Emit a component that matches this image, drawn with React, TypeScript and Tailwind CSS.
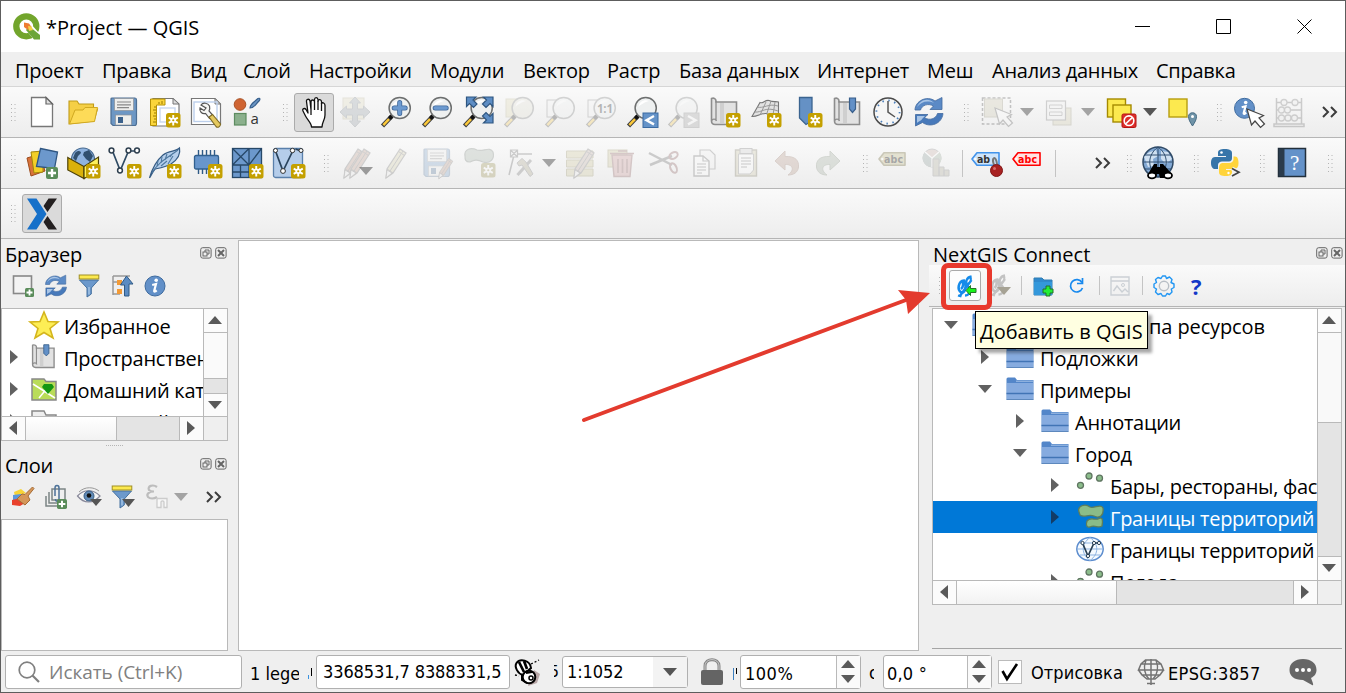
import type { ReactNode } from "react";

type P = { c?: string };

function Ic({ c = "", s = 32, dim = false, children }: { c?: string; s?: number; dim?: boolean; children: ReactNode }) {
  return (
    <svg
      width={s}
      height={s}
      viewBox={`0 0 ${s} ${s}`}
      fill="none"
      className={`shrink-0 overflow-visible ${dim ? "opacity-[0.26]" : ""} ${c}`}
    >
      {children}
    </svg>
  );
}

const Handle = ({ c = "" }: P) => (
  <svg width="5" height="17" viewBox="0 0 5 17" className={`shrink-0 ${c}`}>
    {[0, 4, 8, 12, 16].map((y) => (
      <g key={y} fill="#b4b4b4">
        <rect x="0" y={y} width="1" height="1" />
        <rect x="3.5" y={y} width="1" height="1" />
      </g>
    ))}
  </svg>
);

const Sep = ({ c = "" }: P) => <div className={`w-px shrink-0 bg-[#c4c4c4] ${c}`} />;

const Down = ({ c = "", f = "#a3a3a3" }: P & { f?: string }) => (
  <svg width="14" height="8" viewBox="0 0 14 8" className={`shrink-0 ${c}`}>
    <path d="M0 0H14L7 8Z" fill={f} />
  </svg>
);

const More = ({ c = "" }: P) => (
  <svg width="16" height="12" viewBox="0 0 16 12" className={`shrink-0 ${c}`} fill="none" stroke="#3c3c3c" strokeWidth="2">
    <path d="M1 1L6 6L1 11M9 1L14 6L9 11" />
  </svg>
);

const New = ({ x = 17, y = 16, f = "#c4a000" }: { x?: number; y?: number; f?: string }) => (
  <g transform={`translate(${x} ${y})`}>
    <rect width="14.5" height="14.5" rx="2.5" fill={f} />
    <path d="M7.25 2V12.5M2.7 4.6L11.8 9.9M11.8 4.6L2.7 9.9" stroke="#fff" strokeWidth="1.9" />
    <circle cx="7.25" cy="7.25" r="2.7" fill="#fff" />
    <circle cx="7.25" cy="7.25" r="1.1" fill={f} />
  </g>
);

const Plus = ({ x = 20, y = 20, s = 12 }: { x?: number; y?: number; s?: number }) => (
  <g transform={`translate(${x} ${y}) scale(${s / 12})`}>
    <rect width="12" height="12" rx="2" fill="#5a8c5a" />
    <path d="M6 2V10M2 6H10" stroke="#fff" strokeWidth="2.4" />
  </g>
);

const Glass = ({ fill = "#eef0f0" }: { fill?: string }) => (
  <>
    <path d="M11.5 20.5L2.5 30" stroke="#3f3f3f" strokeWidth="4.4" />
    <path d="M9 23.2L3.3 29.2" stroke="#fcc93a" strokeWidth="2.4" />
    <path d="M12.5 19.3L9.5 22.5" stroke="#111" strokeWidth="4" />
    <circle cx="19.7" cy="12" r="10.6" fill={fill} stroke="#6d6f6f" strokeWidth="1.5" />
    <path d="M12.5 11C13 5 19 3 23 5C19 6 14 9 12.5 11Z" fill="#fff" />
  </>
);

const Pointer = ({ x, y }: { x: number; y: number }) => (
  <path transform={`translate(${x} ${y})`} d="M0 0L4.5 16L8 12L13.5 18.5L17.5 15L12 9L16.5 6.5Z" fill="#fff" stroke="#444" strokeWidth="1.2" />
);

const Scroll = () => (
  <>
    <path d="M3.5 2.5C6 1.5 8 3 8 5V6H28.5V28.5H7C4.5 28.5 3.5 27 3.5 25Z" fill="#e2e2e2" stroke="#8d8d8d" strokeWidth="1.6" />
    <path d="M8 5V25M3.5 25C4 22.5 8 22.5 8.5 25" stroke="#8d8d8d" strokeWidth="1.3" />
    <path d="M12 7H16V27H12Z" fill="#cfcfcf" />
  </>
);

const Refresh = () => (
  <>
    <path d="M2 14C2 5 14-1 22 5L29 1.5V13.5H17L20.5 10C15 7 9 9 7.5 14Z" fill="#5b8ac6" stroke="#41699e" strokeWidth=".8" />
    <path d="M30 17.5C29 28 17 32 9.5 26.5L2.5 30V18.5H15L11.5 21.5C16 25 23 23 24.5 17.5Z" fill="#4779ba" stroke="#41699e" strokeWidth=".8" />
    <path d="M4 11C7 4 15 1 21 7C14 4 8 6 4 11Z" fill="#a9c5e6" />
    <path d="M4 20H12L9 23C9 24 5 26 4 27Z" fill="#a9c5e6" />
  </>
);

const Floppy = () => (
  <>
    <path d="M5 2H28C29 2 29.5 3 29.5 4V27C29.5 28.5 29 29.5 27.5 29.5H6L4 27.5V3C4 2.3 4.4 2 5 2Z" fill="#6d97c4" stroke="#4d6f94" strokeWidth="1.2" />
    <rect x="7.5" y="2.5" width="19" height="12" fill="#eeeeec" stroke="#8b9197" strokeWidth=".7" />
    <path d="M10 6H24M10 8.8H24M10 11.6H22" stroke="#888" strokeWidth="1.2" />
    <rect x="8.5" y="19" width="16" height="10" fill="#eeeeec" stroke="#8b9197" strokeWidth=".7" />
    <rect x="11" y="21" width="5" height="6" fill="#3b618b" />
  </>
);

const Pencil = ({ x = 0, y = 0, k = 1, f = "#d5cda8" }: { x?: number; y?: number; k?: number; f?: string }) => (
  <g transform={`translate(${x} ${y}) scale(${k})`}>
    <path d="M18 2L24 6L11 26L4 31L5 22Z" fill={f} stroke="#666" strokeWidth="1.2" />
    <path d="M21 4L8 24M5 22L11 26M16.5 4.5L22.5 8.5" stroke="#666" strokeWidth="1" />
    <path d="M5 23L10 26L4 31Z" fill="#eee" stroke="#555" strokeWidth=".8" />
  </g>
);

const Nodes = () => (
  <>
    <path d="M4.5 4L12 23M12.5 23L20.5 4M23 4H29" stroke="#2e4a63" strokeWidth="1.7" />
    {[[3.5, 3.5], [12, 23.5], [20.5, 3.5], [29, 3.5]].map(([a, b]) => (
      <circle key={a} cx={a} cy={b} r="2.4" fill="#fff" stroke="#2e3f4f" strokeWidth="1.5" />
    ))}
  </>
);

const Info = () => (
  <>
    <circle cx="12" cy="12" r="10" fill="#6290c8" stroke="#3e6b9f" />
    <circle cx="13.2" cy="6.2" r="1.8" fill="#fff" />
    <path d="M9.2 11L13 10L11.2 16.8C11 18 12.2 17.6 13.7 16.4" stroke="#fff" strokeWidth="2.2" />
  </>
);

const Funnel = () => (
  <>
    <path d="M2.5 6H21.5L14.3 14V20L10 23V14Z" fill="#6c99cc" stroke="#45719f" strokeWidth="1" />
    <rect x="2.2" y="1" width="19.6" height="4" fill="#fce94f" stroke="#a08f25" strokeWidth="1" />
    <path d="M12 13V20.5" stroke="#abc9e8" strokeWidth="1.3" />
  </>
);

const Tag = ({ x = 0, y = 0, f, st, t, w = 27 }: { x?: number; y?: number; f: string; st: string; t: string; w?: number }) => (
  <g transform={`translate(${x} ${y})`}>
    <path d={`M1 7L6 .8H${w}V13.2H6Z`} fill={f} stroke={st} strokeWidth="1.6" strokeLinejoin="round" />
    <circle cx="4.3" cy="7" r="1.2" fill="#fff" />
    <text x="6" y="11" fontSize="10.5" fontWeight="700" fontFamily="DejaVu Sans Condensed, Open Sans, sans-serif" fill={st === "#f00" ? "#f00" : "#333"} textLength={t === "abc" ? 19 : 13}>
      {t}
    </text>
  </g>
);

function Toolbar1() {
  return (
    <div className="flex h-[51px] shrink-0 items-center border-b border-[#b5b5b5] bg-gradient-to-b from-[#fafafa] to-[#ededed] pl-[10px]">
      <Handle />
      <div className="ml-[9px] flex gap-[9px]">
        <Ic>
          <path d="M6.5 1.5H21L27.5 8V30.5H6.5Z" fill="#fff" stroke="#777" strokeWidth="1.3" />
          <path d="M21 1.5V8H27.5Z" fill="#e0e0e0" stroke="#666" strokeWidth="1.2" />
        </Ic>
        <Ic>
          <path d="M3 28V5H11L13 8H27.5V13H31.5L28 25L3 28Z" fill="#f5cf45" stroke="#c09b18" strokeWidth="1.1" />
          <path d="M3.5 28L9 14H17L19 11.5H31.5L28.5 25.5Z" fill="#fddb58" stroke="#d1a921" strokeWidth="1" />
        </Ic>
        <Ic><Floppy /></Ic>
        <Ic>
          <path d="M5 2.5H25L31 8V30H5Z" fill="#fff" stroke="#777" strokeWidth="1.2" />
          <path d="M25 2.5V8H31Z" fill="#ddd" stroke="#777" />
          <path d="M2.5 3H17V9H8.5V29.5H2.5Z" fill="#fbd53b" stroke="#b59207" strokeWidth="1" />
          <path d="M6 11H8M5 14H8M6 17H8M5 20H8M6 23H8M5 26H8M11 6V8M14 5V8" stroke="#9a7b00" strokeWidth="1" />
          <rect x="12" y="12" width="15" height="14" fill="none" stroke="#c9d8ee" strokeWidth="1.4" />
          <New x={18} y={17} />
        </Ic>
        <Ic>
          <path d="M2.5 2.5H26L31.5 8V28.5H2.5Z" fill="#fff" stroke="#777" strokeWidth="1.2" />
          <path d="M26 2.5V8H31.5Z" fill="#ddd" stroke="#777" />
          <rect x="5" y="6" width="23" height="19.5" stroke="#bccfeb" strokeWidth="1.4" />
          <path d="M12 9C14 6 19 7 20.5 10C21 12 20.5 14 20 15L24 19.5L20.5 22.5L16.5 17.5C13 18.5 10 15 11 12L15 14.5L17 12Z" fill="#f6f6f4" stroke="#555" strokeWidth="1.2" />
          <path d="M20 21L23.5 18.5L31.5 28C31.5 31 28.5 32 27 30.5Z" fill="#e5c95e" stroke="#7d6a25" strokeWidth="1.1" />
        </Ic>
        <Ic>
          <circle cx="10" cy="8.5" r="5.8" fill="#cf6432" stroke="#a94f22" strokeWidth="1" />
          <path d="M20 12C20 8 23 7 28 2.5C30 1.5 30.5 3.5 29 5C25 9 24 12 20 12Z" fill="#6b95c4" stroke="#365f8c" strokeWidth="1.2" />
          <rect x="4.5" y="17.5" width="11.5" height="11.5" fill="#8bb08d" stroke="#5d8c60" strokeWidth="1.2" />
          <text x="20.5" y="28" fontSize="15" fontFamily="Open Sans, sans-serif" fill="#333">a</text>
        </Ic>
      </div>
      <Handle c="ml-[21px]" />
      <div className="ml-[6px] flex h-[39px] w-[40px] items-center justify-center rounded-[3px] border border-[#ababab] bg-[#dadada]">
        <Ic>
          <path d="M13 19V6C13 3.3 16.3 3.3 16.5 6V3.5C16.7 .8 19.8 1 20 3.7V5C20.5 2.8 23.5 3.3 23.5 5.8V7.5C24.5 6 27 7 27 9.5V19C27 24 24 26 24 31H13.5C13.5 27 9.5 24 7.5 20L5 15C4 12.5 6.7 11.7 8 13.5L10 17L8.5 5.5C8 3 11.3 2.3 12 5L13 14" fill="#fff" stroke="#111" strokeWidth="1.3" strokeLinejoin="round" />
          <path d="M16.5 6V14M20 5V14M23.5 7V15" stroke="#111" strokeWidth="1.3" />
        </Ic>
      </div>
      <div className="ml-[5px] flex gap-[9px]">
        <Ic dim>
          <rect x="4" y="2" width="21" height="21" fill="#ded8b8" stroke="#b7b08d" />
          <path d="M16 1L21.5 7H18.5V13H24.5V10L31 16L24.5 22V19H18.5V25H21.5L16 31L10.5 25H13.5V19H7.5V22L1 16L7.5 10V13H13.5V7H10.5Z" fill="#8a949c" stroke="#6c757c" />
        </Ic>
        <Ic><Glass /><path d="M19.7 6.5V17.5M14.2 12H25.2" stroke="#41699b" strokeWidth="5" strokeLinecap="round" /><path d="M19.7 6.5V17.5M14.2 12H25.2" stroke="#6c9ad0" strokeWidth="3.4" strokeLinecap="round" /></Ic>
        <Ic><Glass /><path d="M14.2 12H25.2" stroke="#41699b" strokeWidth="5" strokeLinecap="round" /><path d="M14.2 12H25.2" stroke="#6c9ad0" strokeWidth="3.4" strokeLinecap="round" /></Ic>
        <Ic>
          <Glass />
          <path d="M4.5 1H14L11 4L15 8L11.5 11.5L7.5 7.5L4.5 10.5ZM31 1H21.5L24.5 4L20.5 8L24 11.5L28 7.5L31 10.5ZM31 27H21.5L24.5 24L20.5 20L24 16.5L28 20.5L31 17.5Z" fill="#5d8dc4" stroke="#2f5680" strokeWidth="1.2" />
        </Ic>
        <Ic dim><rect x="3" y="3" width="15" height="18" fill="#ddd6ab" stroke="#b4ae8a" /><Glass fill="#e0dfd0" /></Ic>
        <Ic dim><rect x="3" y="4" width="14" height="17" fill="#f3f3f3" stroke="#777" /><Glass /></Ic>
        <Ic dim><rect x="3" y="4" width="14" height="17" fill="#f3f3f3" stroke="#777" /><Glass /><text x="12" y="16.5" fontSize="11.5" fontWeight="700" fontFamily="Open Sans, sans-serif" fill="#000" textLength="16">1:1</text></Ic>
        <Ic><Glass /><rect x="17" y="17" width="15" height="14.5" fill="#6593c8" stroke="#3b6ba2" /><path d="M28 20L20.5 24.2L28 28.4" stroke="#fff" strokeWidth="2.4" /></Ic>
        <Ic dim><Glass /><rect x="17" y="17" width="15" height="14.5" fill="#999" stroke="#777" /><path d="M21 20L28.5 24.2L21 28.4" stroke="#fff" strokeWidth="2.4" /></Ic>
        <Ic><Scroll /><New x={18} y={17} /></Ic>
        <Ic>
          <path d="M3 20.5L11 6.5C14 8 16 3.5 20 4.5C24 6.5 27 5 29.5 6V22L17 17.5C12 17 8 21 3 20.5Z" fill="#e2e2e2" stroke="#777" strokeWidth="1.1" />
          <path d="M5.5 16C13 17 16 10 29 15M8 11C14 13 20 7 29 10M11 19L17 6M18 17L22 5M24 19L26 6" stroke="#999" strokeWidth="1" />
          <New x={18} y={17} />
        </Ic>
        <Ic><path d="M9.5 1.5H22V25L16 28.5L9.5 22Z" fill="#6591c5" stroke="#3b6490" strokeWidth="1.3" /><New x={18} y={17} /></Ic>
        <Ic><Scroll /><path d="M18.5 2H24.5V13L21.5 16.5L18.5 13Z" fill="#6290c7" stroke="#395f8b" strokeWidth="1.2" /></Ic>
        <Ic>
          <circle cx="16" cy="16" r="14" fill="#f6f6f6" stroke="#4a4a4a" strokeWidth="1.5" />
          <circle cx="16" cy="16" r="11.6" stroke="#4d80bb" strokeWidth="1.8" strokeDasharray="1.5 4.57" />
          <path d="M16 5V16L23 21" stroke="#555" strokeWidth="1.5" />
        </Ic>
        <Ic><Refresh /></Ic>
      </div>
      <Handle c="ml-[19px]" />
      <Ic c="ml-[12px]" dim>
        <rect x="1.5" y="2" width="28" height="26" stroke="#333" strokeWidth="1.5" strokeDasharray="3 2" />
        <rect x="3.5" y="3" width="18" height="18" fill="#c5c0a4" stroke="#8e8a70" />
        <Pointer x={14} y={12} />
      </Ic>
      <Down c="ml-[7px]" />
      <Ic c="ml-[8px]" dim>
        <rect x="11" y="12" width="18" height="17" fill="#d0caa8" stroke="#8e8a70" />
        <rect x="4.5" y="5" width="19" height="19" fill="#f2f2f2" stroke="#666" strokeWidth="1.2" />
        <path d="M7.5 9H20V12.5H7.5ZM7.5 16H20V19.5H7.5Z" stroke="#777" />
      </Ic>
      <Down c="ml-[7px]" />
      <Ic c="ml-[9px]">
        <rect x="3.5" y="3" width="18" height="18" fill="#fce94f" stroke="#a58a00" strokeWidth="1.4" />
        <rect x="9" y="9" width="18" height="17" fill="#fce94f" stroke="#a58a00" strokeWidth="1.4" />
        <rect x="18" y="18" width="14" height="13.5" rx="1.5" fill="#dd2d2a" stroke="#b31312" />
        <circle cx="25" cy="24.7" r="4.8" stroke="#fff" strokeWidth="1.6" /><path d="M21.5 28L28.5 21.3" stroke="#fff" strokeWidth="1.6" />
      </Ic>
      <Down c="ml-[7px]" f="#555" />
      <Ic c="ml-[9px]">
        <rect x="3" y="3" width="18" height="18" fill="#fce94f" stroke="#b79d10" strokeWidth="1.4" />
        <path d="M26.5 30C24 26 22.5 23.5 22.5 20.5C22.5 15.5 30.5 15.5 30.5 20.5C30.5 23.5 29 26 26.5 30Z" fill="#6f93a8" stroke="#476c83" /><circle cx="26.5" cy="20.5" r="1.5" fill="#fff" />
      </Ic>
      <Handle c="ml-[19px]" />
      <Ic c="ml-[10px]"><g transform="translate(.5 .3)"><Info /></g><Pointer x={15} y={13} /></Ic>
      <Ic c="ml-[9px]" dim>
        <path d="M3.5 2V27.5M28.5 2V27.5M1 28H31V30.5H1ZM3.5 6.5H28M3.5 14H28M3.5 22H28" stroke="#555" strokeWidth="1.5" />
        {[[11, 6.5], [22, 6.5], [8.5, 14], [14.5, 14], [8.5, 22], [15, 22], [21.5, 22]].map(([x, y], i) => <circle key={i} cx={x} cy={y} r="3" fill="#eee" stroke="#666" strokeWidth="1.3" />)}
      </Ic>
      <More c="ml-[17px]" />
    </div>
  );
}

function Toolbar2() {
  return (
    <div className="flex h-[51px] shrink-0 items-center border-b border-[#b5b5b5] bg-gradient-to-b from-[#fafafa] to-[#ededed] pl-[10px]">
      <Handle />
      <div className="ml-[10px] flex gap-[9px]">
        <Ic>
          <path d="M1 11L14 7L19 24L5 29Z" fill="#d9733a" stroke="#9d4b1c" />
          <path d="M5 5L17 4V25L8 26Z" fill="#f3cf27" stroke="#a3850b" />
          <path d="M14.5 1.5L31.5 5L28.5 21.5L10.5 19.5Z" fill="#6c98cc" stroke="#2f5682" strokeWidth="1.3" />
          <Plus x={20} y={20} />
        </Ic>
        <Ic>
          <circle cx="16" cy="12.5" r="11.5" fill="#8fb3df" stroke="#46698f" strokeWidth="1.2" />
          <path d="M8 6C11 3 14 4 14 6L11 9L9 14L6 11ZM17 5L22 3L26 9L23 15L19 12L16 8Z" fill="#31506f" />
          <path d="M.8 10.5L17 19.5V31.5L.8 23Z" fill="#dab10b" stroke="#4d4107" strokeWidth="1.2" />
          <path d="M17 19.5L31.5 10V24L17 31.5Z" fill="#fdf15c" stroke="#4d4107" strokeWidth="1.2" />
          <New x={19} y={17} />
        </Ic>
        <Ic><Nodes /><New x={19} y={17} /></Ic>
        <Ic>
          <path d="M.5 31C3 22 7 14 14 8C20 3 27 5 30.5 1C32 8 28 13 22 17C17 20 11 21 6 22C3.5 25 2.5 28 .5 31Z" fill="#b5cfec" stroke="#365c84" strokeWidth="1.2" />
          <path d="M3 26C9 15 20 10 29 3M9 14L8 19M13 10L12 16M18 7L16 13M24 6L21 10M12 19L18 14M19 17L24 9" stroke="#4e789f" strokeWidth="1.1" />
          <New x={18} y={17} />
        </Ic>
        <Ic>
          <path d="M8.5 3V27M12.5 3V27M16.5 3V27M20.5 3V27M24.5 3V27" stroke="#2f5a86" strokeWidth="1.4" />
          <rect x="4.5" y="8.5" width="24" height="13.5" rx="1.5" fill="#6896cc" stroke="#31608f" strokeWidth="1.3" />
          <New x={18} y={17} />
        </Ic>
        <Ic>
          <rect x="1.5" y="1.5" width="29" height="29" fill="#6c98cc" stroke="#274868" strokeWidth="1.3" />
          <path d="M1.5 18H30.5M18 1.5V30.5M1.5 1.5L18 18M18 1.5L1.5 18M18 18L30.5 1.5M9.5 18V30.5M1.5 25H18" stroke="#274868" strokeWidth="1.3" />
          <New x={18} y={17} />
        </Ic>
        <Ic>
          <rect x="1.5" y="1.5" width="29" height="29" rx="2" fill="#b5cdea" stroke="#5a80ab" strokeWidth="1.3" />
          <path d="M3.5 4L11 24L21 3.5M23.5 2L29 4" stroke="#29435c" strokeWidth="1.7" />
          <circle cx="11" cy="24" r="2.4" fill="#fff" stroke="#333" /><circle cx="20.5" cy="3.5" r="2.2" fill="#fff" stroke="#333" /><circle cx="3.5" cy="3.5" r="2" fill="#fff" stroke="#333" /><circle cx="29" cy="3.5" r="2" fill="#fff" stroke="#333" />
          <New x={19} y={17} />
        </Ic>
      </div>
      <Handle c="ml-[20px]" />
      <div className="ml-[12px] flex items-center gap-[9px]">
        <div className="flex">
          <Ic dim><Pencil x={-1} f="#b58f7e" /><Pencil x={5} f="#b58f7e" /></Ic>
          <Down c="-ml-[14px] mt-[20px]" f="#9a9a9a" />
        </div>
        <Ic dim><Pencil f="#cfc9a0" /></Ic>
        <Ic dim><g transform="translate(-3 0)"><Floppy /></g><Pencil x={13} y={10} k={0.7} f="#b58f7e" /></Ic>
        <Ic dim>
          <path d="M1 9C0 2 7 0 13 3C19 5 26-1 29 5C31 12 26 17 19 15C13 12 10 13 6 15C1 15 1 12 1 9Z" fill="#9ba99d" stroke="#667068" strokeWidth="1.2" />
          <New f="#8b8137" />
        </Ic>
        <Ic dim>
          <path d="M4 28L9 8M12 7H27" stroke="#555" strokeWidth="1.5" /><path d="M5.5 3H12.5V10H5.5ZM5.5 3L12.5 10M12.5 3L5.5 10" fill="#eee" stroke="#555" strokeWidth="1.2" />
          <path d="M26 13L12.5 28" stroke="#666" strokeWidth="3" /><path d="M12 16L17 11.5C19 13 20 14 21 15L28 27L25 29.5L17 18L14 19Z" fill="#a19b7e" stroke="#666" />
        </Ic>
      </div>
      <Down c="ml-[5px]" />
      <div className="ml-[9px] flex gap-[9px]">
        <Ic dim><path d="M1.5 4H28V11H1.5ZM1.5 13H28V20H1.5ZM1.5 22H28V29H1.5Z" fill="#c9c18e" stroke="#8d8657" /><Pencil x={5} f="#b9a59b" /></Ic>
        <Ic dim>
          <rect x="2" y="3" width="19" height="17" fill="#c9c18e" stroke="#8d8657" />
          <path d="M6 8H26L24 29.5H8Z" fill="#c48a8a" stroke="#7d4949" strokeWidth="1.4" /><path d="M4 6.5H28M12 4H21M12 12V26M16.5 12V26M21 12V26" stroke="#7d4949" strokeWidth="1.7" />
        </Ic>
        <Ic dim c="ml-[1px]">
          <path d="M1 6L24 18M2 18L24 9" stroke="#555" strokeWidth="2.5" /><ellipse cx="25.5" cy="8.5" rx="4.5" ry="3" transform="rotate(-30 25.5 8.5)" stroke="#7d4949" strokeWidth="2" /><ellipse cx="25.5" cy="21" rx="3" ry="5" transform="rotate(-25 25.5 21)" stroke="#7d4949" strokeWidth="2" />
        </Ic>
        <Ic dim>
          <path d="M11 3H21L26 8V22H11Z" fill="#f1f1f1" stroke="#666" strokeWidth="1.2" />
          <path d="M5 9H14L20 14V29H5Z" fill="#fff" stroke="#555" strokeWidth="1.4" /><path d="M14 9V14H20M8 17H17M8 20H17M8 23H17M8 26H13" stroke="#555" strokeWidth="1.2" />
        </Ic>
        <Ic dim>
          <rect x="5.5" y="3" width="21" height="26" fill="#c7c19e" stroke="#6e694f" strokeWidth="1.4" /><path d="M8.5 7H23.5V23L20 27H8.5Z" fill="#fff" stroke="#777" /><rect x="10" y="1.5" width="12" height="5" fill="#ccc" stroke="#666" /><path d="M11 11H21M11 14H21M11 17H21M11 20H17" stroke="#555" strokeWidth="1.2" />
        </Ic>
        <Ic dim><path d="M4 14L14 4V9.5C25 9 28 14 27.5 20C27 25 23 28 17 28C24 23 22 17 14 17.5V23Z" fill="#ad8b7a" stroke="#8e6d5d" /></Ic>
        <Ic dim><path d="M28 14L18 4V9.5C7 9 4 14 4.5 20C5 25 9 28 15 28C8 23 10 17 18 17.5V23Z" fill="#97a393" stroke="#768270" /></Ic>
      </div>
      <Handle c="ml-[19px]" />
      <Ic c="ml-[10px] opacity-40"><Tag y={5} f="#c9c49b" st="#8a845e" t="abc" /></Ic>
      <Ic c="ml-[11px]" dim>
        <circle cx="11" cy="11" r="9" fill="#c0a49b" stroke="#777" /><path d="M11 11L18 5A9 9 0 0 1 13 20Z" fill="#91a28e" /><path d="M11 11L4 5A9 9 0 0 0 11 20Z" fill="#7d8e8b" /><path d="M11 11V20M11 11L4 5M11 11L18 5" stroke="#fff" strokeWidth="1.3" />
        <path d="M12 12H18V29H12ZM18 20H23V29H18ZM23 23H28V29H23Z" fill="#a6a38e" stroke="#777" />
      </Ic>
      <Sep c="ml-[9px] h-[27px]" />
      <Ic c="ml-[8px]">
        <Tag y={5} f="#cfe5fb" st="#4293ea" t="ab" w={28} />
        <path d="M23 18C20 10 25 8 26 17" stroke="#777" strokeWidth="2" /><circle cx="25.5" cy="23.5" r="6" fill="#a82222" stroke="#801515" /><circle cx="23.5" cy="21.5" r="1.5" fill="#d86b6b" />
      </Ic>
      <Ic c="ml-[9px]"><Tag y={5} f="#ffe3e3" st="#f00" t="abc" w={28} /></Ic>
      <Sep c="ml-[11px] h-[27px]" />
      <More c="ml-[39px]" />
      <Handle c="ml-[16px]" />
      <Ic c="ml-[10px]">
        <circle cx="16" cy="15" r="15" fill="#83a9d4" stroke="#304a66" strokeWidth="1.5" />
        <path d="M2 10C7 3 11 5 14 3L16 9L11 12L12 19L6 20ZM19 4L26 5L30 12L24 17L19 12Z" fill="#cfe0f1" />
        <path d="M1.5 15H30.5M16 0V30M3 8H29M3 22H29M16 0C5 8 5 22 16 30M16 0C27 8 27 22 16 30" stroke="#304f70" strokeWidth="1" />
        <path d="M6 27L12 17H15V20H18V17H21L30 27V31H18L17 27H15L13 31H6Z" fill="#000" />
        <ellipse cx="10" cy="28.5" rx="4" ry="2.8" fill="#fff" stroke="#000" strokeWidth="1.8" /><ellipse cx="26" cy="28.5" rx="4" ry="2.8" fill="#fff" stroke="#000" strokeWidth="1.8" />
      </Ic>
      <Handle c="ml-[20px]" />
      <Ic c="ml-[11px]">
        <path d="M15 2C10 2 8 3 8 6V9H16V10H5C2 10 1 13 1 16C1 20 3 22 5 22H8V18C8 16 10 14.5 12 14.5H19C21 14.5 22 13 22 11V6C22 3 19 2 15 2Z" fill="#3775a9" />
        <path d="M16 29C11 29 9 28 9 25V22C9 18 10 16 13 16H19C22 16 23.5 14 23.5 12V9.5H25C28 9.5 28.5 13 28.5 16C28.5 20 27 22 24 22H16V23H22V25C22 28 20 29 16 29Z" fill="#ffd43b" />
        <circle cx="11.5" cy="5.5" r="1.3" fill="#fff" /><circle cx="18.5" cy="26" r="1.2" fill="#fff" />
        <path d="M22 21.5L29 25.2L22 29" stroke="#f2f2f2" strokeWidth="4" /><path d="M22 21.5L29 25.2L22 29" stroke="#444" strokeWidth="1.7" />
      </Ic>
      <Handle c="ml-[18px]" />
      <Ic c="ml-[11px]">
        <rect x="2.5" y="1.5" width="27" height="28" fill="#6492c9" stroke="#222f3b" strokeWidth="1.5" /><path d="M3 2H8.5V29H3Z" fill="#2a3b4c" />
        <text x="14" y="23" fontSize="21" fontFamily="Liberation Serif, serif" fill="#fff">?</text>
      </Ic>
      <Handle c="ml-[20px]" />
    </div>
  );
}

const DockButtons = ({ c = "" }: P) => (
  <svg width="27" height="12" viewBox="0 0 27 12" fill="none" stroke="#666" className={`shrink-0 ${c}`}>
    <rect x=".7" y=".7" width="10.4" height="10.4" rx="2" />
    <rect x="3" y="5" width="4" height="4" /><path d="M5 5V3H9V7H7" />
    <rect x="15.7" y=".7" width="10.4" height="10.4" rx="2" />
    <path d="M18 3L24 9M24 3L18 9" strokeWidth="2" />
  </svg>
);

const Tri = ({ d }: { d: "u" | "d" | "l" | "r" }) => {
  const paths = { u: "M7 3L14 11H0Z", d: "M0 3H14L7 11Z", l: "M3 7L11 0V14Z", r: "M11 7L3 0V14Z" };
  return <svg width="14" height="14" viewBox="0 0 14 14" className="-ml-px -mt-px shrink-0"><path d={paths[d]} fill="#595959" /></svg>;
};

const Caret = ({ open, f = "#616161" }: { open?: boolean; f?: string }) => (
  <svg width="14" height="14" viewBox="0 0 14 14" className="shrink-0"><path d={open ? "M0 3H14L7 11Z" : "M3 0L11 7L3 14Z"} fill={f} /></svg>
);

const cell = "flex shrink-0 items-center justify-center bg-[#fbfbfb]";

function BrowserRow({ caret, icon, text }: { caret?: boolean; icon: ReactNode; text: string }) {
  return (
    <div className="flex h-[32px] shrink-0 items-start">
      <div className="w-[28px] shrink-0 pl-[5px] pt-[9px]">{caret && <Caret />}</div>
      <div className="w-[34px] shrink-0 pt-[2px]">{icon}</div>
      <div className="whitespace-nowrap pt-[4px] text-[20px] leading-[28px] tracking-[-0.25px]">{text}</div>
    </div>
  );
}

function LeftColumn() {
  return (
    <div className="flex w-[237px] shrink-0 flex-col">
      <div className="flex h-[34px] items-start justify-between pl-[4px] pr-[11px]">
        <div className="pt-[3px] text-[20px] leading-[26px] tracking-[-0.25px]">Браузер</div>
        <DockButtons c="mt-[8px]" />
      </div>
      <div className="flex h-[26px] items-center gap-[9px] pl-[10px]">
        <Ic s={24}><rect x="2.5" y="2" width="18" height="17.5" fill="#f3f3f3" stroke="#888" strokeWidth="1.6" /><Plus x={14} y={14} s={9} /></Ic>
        <Ic s={24}><g transform="scale(.75)"><Refresh /></g></Ic>
        <Ic s={24}><Funnel /></Ic>
        <Ic s={24}>
          <path d="M3 2V21M3 2H20M3 8H10M3 20H10" stroke="#999" strokeWidth="1.5" /><path d="M7 6H12V11H7ZM7 15H12V20H7Z" fill="#f39a35" /><path d="M14.5 22V11H10.5L16.5 2L23 10H19V22Z" fill="#5b8bc2" stroke="#305a86" />
        </Ic>
        <Ic s={24}><Info /></Ic>
      </div>
      <div className="mt-[9px] flex h-[133px] w-[227px] flex-col border border-[#b9b9b9] bg-white">
        <div className="flex h-[107px]">
          <div className="flex w-[201px] flex-col overflow-hidden">
            <BrowserRow text="Избранное" icon={<Ic s={28}><path d="M14 1L18 10.5L28 11L20 17.5L23 27L14 21.5L5 27L8 17.5L0 11L10 10.5Z" fill="#fdee55" stroke="#d4b51d" strokeWidth="1.6" /></Ic>} />
            <BrowserRow caret text="Пространственные" icon={<Ic s={28}><g transform="scale(.86) translate(-.5 0)"><Scroll /><path d="M16.5 2H22.5V12L19.5 15L16.5 12Z" fill="#6290c7" stroke="#395f8b" /></g></Ic>} />
            <BrowserRow caret text="Домашний каталог" icon={<Ic s={28}><path d="M2 4H14L16 6.5H26V25H2Z" fill="#b9dc58" stroke="#888" strokeWidth="1.5" /><path d="M3 9L25 23M9 23L18 12" stroke="#fff" strokeWidth="1.5" /><path d="M12 12L14 9H22L24 12L18 19Z" fill="#159612" /></Ic>} />
            <BrowserRow caret text="Домашний" icon={<Ic s={28}><path d="M2 4H14L16 8H26V25H2Z" fill="#eee" stroke="#888" strokeWidth="1.5" /></Ic>} />
          </div>
          <div className="flex w-[24px] flex-col border-l border-[#b9b9b9] bg-[#e4e4e4]">
            <div className={`${cell} h-[24px] border-b border-[#b9b9b9]`}><Tri d="u" /></div>
            <div className="h-[46px] border-b border-[#b9b9b9] bg-[#fafafa]" />
            <div className="h-[14px]" />
            <div className={`${cell} h-[23px] border-t border-[#b9b9b9]`}><Tri d="d" /></div>
          </div>
        </div>
        <div className="flex h-[24px] border-t border-[#b9b9b9] bg-[#e4e4e4]">
          <div className={`${cell} w-[24px] border-r border-[#b9b9b9]`}><Tri d="l" /></div>
          <div className="w-[91px] border-r border-[#b9b9b9] bg-gradient-to-b from-white to-[#f2f2f2]" />
          <div className="flex-1" />
          <div className={`${cell} w-[24px] border-l border-[#b9b9b9]`}><Tri d="r" /></div>
          <div className="w-[24px] border-l border-[#b9b9b9] bg-[#efefef]" />
        </div>
      </div>
      <div className="flex h-[9px] w-[227px] items-center justify-center"><div className="w-[17px] border-t border-dotted border-[#b5b5b5]" /></div>
      <div className="flex h-[34px] items-start justify-between pl-[4px] pr-[11px]">
        <div className="pt-[3px] text-[20px] leading-[26px] tracking-[-0.15px]">Слои</div>
        <DockButtons c="mt-[8px]" />
      </div>
      <div className="flex h-[26px] items-center pl-[9px]">
        <Ic s={24}>
          <path d="M4 7L11 4L16 8L5 12Z" fill="#f7d437" /><path d="M3 10L11 9L12 15L3 16Z" fill="#5b97dc" /><path d="M2 15L11 13L15 18L10 21L2 20Z" fill="#e9412c" />
          <path d="M22.5 2L24 3.5L18 11L20 15L15 20L7 14L12 9L15 9.5Z" fill="#d5975a" stroke="#a56b35" />
        </Ic>
        <Ic s={24} c="ml-[9px]"><path d="M3 11V21H17M6 7V18H18M9 4H22V15H9Z" stroke="#7c8585" strokeWidth="1.5" /><path d="M12 11V3C12-.3 16-.3 16 3V14C16 17 12.5 17 12.5 14" stroke="#4d7299" strokeWidth="1.5" /><Plus x={14} y={14} s={10} /></Ic>
        <Ic s={24} c="ml-[10px]">
          <path d="M.5 11C7 4 16 4 23 11C16 19 7 19 .5 11Z" fill="#f5f5f5" stroke="#889" strokeWidth="1.2" /><path d="M2 7C8 1 17 2 22 6" stroke="#999" /><circle cx="12" cy="11" r="5" fill="#628bb7" stroke="#375c84" /><circle cx="12" cy="10.5" r="2.3" fill="#111" /><path d="M13 14H25L19 21Z" fill="#555" />
        </Ic>
        <Ic s={24} c="ml-[9px]"><Funnel /><path d="M12 14H25L18.5 22Z" fill="#555" /></Ic>
        <Ic s={24} c="ml-[11px]"><path d="M12 2C8-1 2 1 4 5C5 6 7 6.5 9 6.5C4 6.5 1 9 3 12C5 14 9 14 12 12" stroke="#bdbdbd" strokeWidth="2.2" /><path d="M12 13.5H22V22.5H19V17C19 15.5 16 15.5 16 17V22.5H12Z" fill="#f8f8f8" stroke="#ccc" strokeWidth="1.3" /></Ic>
        <Down c="ml-[5px]" />
        <More c="ml-[18px]" />
      </div>
      <div className="mt-[9px] h-[132px] w-[227px] border border-[#b9b9b9] bg-white" />
    </div>
  );
}

const Folder = () => (
  <svg width="28" height="24" viewBox="0 0 28 24" className="shrink-0">
    <path d="M.5 2Q.5 .5 2 .5H9L11 3H27.5V22.5H.5Z" fill="#5386c9" />
    <path d="M1 6H27V22H1Z" fill="#86abdf" />
    <path d="M10 4.2H27.5" stroke="#a8c4e8" />
    <path d="M.5 16.5H27.5" stroke="#4174b5" strokeWidth="1.5" />
    <path d="M.5 22.5H27.5" stroke="#5d88bd" />
  </svg>
);

const Points = () => (
  <Ic s={28}>{[[4.5, 12.3], [13, 3], [23.5, 5.2]].map(([x, y]) => <circle key={x} cx={x} cy={y} r="3" fill="#8bbd8b" stroke="#5f7561" strokeWidth="1.3" />)}</Ic>
);

const indents = ["pl-[11px]", "pl-[45px]", "pl-[80px]", "pl-[115px]"];

function TreeRow({ level, open, leaf, icon, text, sel, track = "tracking-[-0.27px]" }: { level: number; open?: boolean; leaf?: boolean; icon: ReactNode; text: string; sel?: boolean; track?: string }) {
  return (
    <div className={`flex h-[32px] shrink-0 items-start ${indents[level]} ${sel ? "bg-[#0078d7] text-white" : ""}`}>
      <div className="w-[28px] shrink-0 pt-[9px]">{!leaf && <Caret open={open} f={sel ? "#123c66" : "#616161"} />}</div>
      <div className="flex h-full w-[34px] shrink-0 items-start pt-[4px]">{icon}</div>
      <div className={`h-full flex-1 whitespace-nowrap pt-[4px] text-[20px] leading-[28px] ${track} ${sel ? "bg-[#1683dd]" : ""}`}>{text}</div>
    </div>
  );
}

const Shell = ({ dim }: { dim?: boolean }) => (
  <g stroke={dim ? "#c2c2c2" : "#158bea"} fill="none">
    <path d="M8.5 5.5C3 6 1 15 6 17.5C10 18.5 11.5 10 8.5 5.5ZM5.5 14C8 12 8 8 7 7" strokeWidth="2.6" />
    <path d="M16 1.5C11 2 9 8 12 11C16 14 15 20 9.5 20.5M15 2C16 5 14.5 8 12 9M4 21.5L16 5M2.5 20.5L6 21.5" strokeWidth="2.3" />
  </g>
);

function RightColumn() {
  return (
    <div className="flex min-w-0 flex-1 flex-col pl-[10px]">
      <div className="flex h-[26px] items-start justify-between pl-[4px] pr-[2px]">
        <div className="whitespace-nowrap pt-[3px] text-[20px] leading-[26px]">NextGIS Connect</div>
        <DockButtons c="mt-[8px]" />
      </div>
      <div className="flex h-[42px] items-center border-b border-[#b5b5b5] bg-gradient-to-b from-[#fafafa] to-[#ededed] pl-[10px]">
        <Handle />
        <div className="relative ml-[5px] flex h-[31px] w-[32px] items-center justify-center rounded-[3px] border border-[#aaa] bg-[#fdfdfd]">
          <div className="absolute -left-[9px] -top-[8px] h-[47px] w-[51px] rounded-[7px] border-[5px] border-[#e8392d]" />
          <Ic s={22}><g transform="translate(1.5 0)"><Shell /></g><path d="M12 15.500L16.500 10.500V13.500H22V17.500H16.500V20.500Z" fill="#19f51a" stroke="#267428" /></Ic>
        </div>
        <Ic s={24} c="ml-[8px]"><Shell dim /><path d="M8 13H22L15 21Z" fill="#a6a294" /></Ic>
        <Sep c="ml-[8px] h-[19px]" />
        <Ic s={24} c="ml-[10px]"><path d="M2 4H10L12 6H20V21H2Z" fill="#3089cd" stroke="#317eb4" /><path d="M2 8H20V21H2Z" fill="#3498db" /><path d="M13 14V11H17V14H20V18H17V21H13V18H10V14Z" transform="translate(1 1)" fill="#22ef35" stroke="#276f2b" /></Ic>
        <Ic s={24} c="ml-[8px]"><path d="M18 8.5A6.2 6.2 0 1 0 18.5 14" stroke="#1789ee" strokeWidth="1.7" /><path d="M18.5 4V9.5H13" stroke="#1789ee" strokeWidth="1.7" /></Ic>
        <Sep c="ml-[11px] h-[19px]" />
        <Ic s={24} c="ml-[8px]"><path d="M3 3H21V21H3ZM3 7H21M5.5 17L9 12L14 18L17 15L20 18" stroke="#cbd0d5" strokeWidth="1.4" /><circle cx="15" cy="11" r="1.5" stroke="#cbd0d5" /></Ic>
        <Sep c="ml-[10px] h-[19px]" />
        <Ic s={24} c="ml-[9px]">
          <path d="M10.5 2H13.5L14.5 4.5L17.5 3L20 5.5L19 8.5L22 10V13.5L19.3 15L20 18L17.5 20.5L15 19.5L13.5 22H10.5L9 19.5L6 20.5L3.5 18L4.5 15L2 13.5V10L4.5 8.5L3.5 5.5L6 3.5L9 4.5Z" stroke="#2196f3" strokeWidth="1.4" strokeLinejoin="round" /><circle cx="12" cy="12" r="4.7" stroke="#b7bec5" strokeWidth="1.4" />
        </Ic>
        <div className="ml-[15px] text-[22px] font-bold leading-[24px] text-[#1438c8]">?</div>
      </div>
      <div className="ml-[3px] mt-[1px] flex h-[297px] w-[410px] flex-col border border-[#b9b9b9] bg-white">
        <div className="flex h-[271px]">
          <div className="flex w-[384px] flex-col overflow-hidden">
            <TreeRow level={0} open icon={<Folder />} text="Основная группа ресурсов" track="tracking-[-0.12px]" />
            <TreeRow level={1} icon={<Folder />} text="Подложки" track="tracking-[-0.1px]" />
            <TreeRow level={1} open icon={<Folder />} text="Примеры" />
            <TreeRow level={2} icon={<Folder />} text="Аннотации" />
            <TreeRow level={2} open icon={<Folder />} text="Город" />
            <TreeRow level={3} icon={<Points />} text="Бары, рестораны, фастфуд" />
            <TreeRow level={3} sel icon={<Ic s={28}><path d="M3 7C1 1 9-2 14 2C18 4 25-2 27 3C28 10 24 14 18 11C12 9 8 13 4 10Z" fill="#8abc88" stroke="#5e7e5a" strokeWidth="1.3" /><path d="M11 16C14 12 18 15 22 14C27 11 27 16 26 21C22 24 19 19 14 22C10 23 10 19 11 16Z" fill="#8abc88" stroke="#5e7e5a" strokeWidth="1.3" /></Ic>} text="Границы территорий" />
            <TreeRow level={3} leaf icon={<Ic s={28}><ellipse cx="14" cy="12" rx="13.2" ry="11.5" fill="#f5faff" stroke="#5d8dce" strokeWidth="1.5" /><path d="M1 12H27M4 6H24M4 18H24M14 .5C5 7 5 17 14 23.5M14 .5C23 7 23 17 14 23.5" stroke="#8db3e1" /><path d="M6.5 6L12 19L18 6H24" stroke="#273e53" strokeWidth="1.7" />{[[6.5, 6], [12, 19], [18, 6], [23, 6]].map(([x, y]) => <circle key={x} cx={x} cy={y} r="1.6" fill="#fff" stroke="#273e53" />)}</Ic>} text="Границы территорий" />
            <TreeRow level={3} icon={<Points />} text="Погода" />
          </div>
          <div className="flex w-[24px] flex-col border-l border-[#b9b9b9] bg-[#e4e4e4]">
            <div className={`${cell} h-[24px] border-b border-[#b9b9b9]`}><Tri d="u" /></div>
            <div className="h-[90px] border-b border-[#b9b9b9] bg-[#f9f9f9]" />
            <div className="flex-1" />
            <div className={`${cell} h-[24px] border-t border-[#b9b9b9]`}><Tri d="d" /></div>
          </div>
        </div>
        <div className="flex h-[24px] border-t border-[#b9b9b9] bg-[#e4e4e4]">
          <div className={`${cell} w-[24px] border-r border-[#b9b9b9]`}><Tri d="l" /></div>
          <div className="w-[160px] border-r border-[#b9b9b9] bg-gradient-to-b from-white to-[#f2f2f2]" />
          <div className="flex-1" />
          <div className={`${cell} w-[24px] border-l border-[#b9b9b9]`}><Tri d="r" /></div>
          <div className="w-[24px] border-l border-[#b9b9b9] bg-[#efefef]" />
        </div>
      </div>
      <div className="ml-[3px] mt-[43px] h-px w-[410px] bg-[#a5a5a5]" />
    </div>
  );
}

const Spin = () => (
  <div className="flex w-[24px] flex-col items-center justify-center gap-[2px] border-l border-[#b9b9b9] bg-[#fafafa]">
    <Tri d="u" /><Tri d="d" />
  </div>
);

function StatusBar() {
  const field = "flex shrink-0 rounded-[3px] border border-[#b0b0b0] bg-white";
  return (
    <div className="flex h-[41px] items-center overflow-hidden whitespace-nowrap pl-[4px] font-['DejaVu_Sans_Condensed','DejaVu_Sans',sans-serif] text-[18px] [font-stretch:condensed]">
      <div className={`${field} h-[34px] w-[237px] items-center font-['Open_Sans','Noto_Sans',sans-serif] text-[19px] tracking-[-0.05px] text-[#808080] [font-stretch:normal]`}>
        <svg width="22" height="22" viewBox="0 0 22 22" fill="none" stroke="#808080" className="ml-[12px]"><circle cx="9" cy="9" r="7.8" strokeWidth="1.7" /><path d="M14.5 14.5L21 21" strokeWidth="2.2" /></svg>
        <span className="ml-[9px] pt-[2px]">Искать (Ctrl+K)</span>
      </div>
      <div className="ml-[8px] w-[49px] shrink-0 overflow-hidden pt-[3px]">1 legend</div>
      <div className="ml-[9px] mt-[3px] flex h-[11px] w-[4px] shrink-0 items-end justify-between"><div className="h-[4px] w-px bg-[#3b93e0]" /><div className="h-[8px] w-px self-start bg-black" /></div>
      <div className={`${field} ml-[4px] h-[34px] w-[194px] items-center pl-[6px] tracking-[-0.1px]`}>3368531,7 8388331,5</div>
      <Ic s={28} c="ml-[4px]">
        <path d="M20 12L26 16L23 25L14 28Z" fill="#b9a8a8" />
        <path d="M2.5 5C0 9 4 16 9 17L17 10C16 2 6 0 2.5 5Z" fill="#fff" stroke="#000" strokeWidth="2" /><path d="M5 4L10 14M10 3L13 11" stroke="#000" strokeWidth="2.7" />
        <circle cx="15" cy="19" r="6.3" fill="#fff" stroke="#000" strokeWidth="2" /><circle cx="17" cy="20" r="2" stroke="#000" strokeWidth="1.5" /><path d="M8 17V22L13 25M12 15L18 14" stroke="#000" strokeWidth="2" /><path d="M17 6L25 2M1 17L5 18" stroke="#000" strokeWidth="1.3" strokeDasharray="2 2" />
      </Ic>
      <div className="ml-[12px] flex w-[5px] shrink-0 justify-end overflow-hidden text-[16px]">5</div>
      <div className={`${field} ml-[3px] h-[32px] w-[126px] items-center pl-[4px]`}>
        <span className="flex-1 tracking-[-0.1px]">1:1052</span>
        <span className="flex h-full w-[34px] items-center justify-center bg-[#f3f3f3]"><Down f="#555" /></span>
      </div>
      <svg width="22" height="28" viewBox="0 0 22 28" className="ml-[13px] shrink-0" fill="none"><path d="M4 13V8C4-.5 18-.5 18 8V13" stroke="#858585" strokeWidth="3" /><path d="M4 13V8C4-.5 18-.5 18 8V13" stroke="#ddd" strokeWidth=".8" /><rect y="12" width="22" height="15" rx="2" fill="#646464" /></svg>
      <div className="ml-[10px] mt-[4px] flex shrink-0 gap-[2px]"><div className="h-[12px] w-px bg-[#3b7fc0]" /><div className="h-[6px] w-px bg-black" /></div>
      <div className={`${field} ml-[3px] h-[34px] w-[121px]`}><span className="flex-1 self-center pl-[4px] pt-[3px] tracking-[0.5px]">100%</span><Spin /></div>
      <div className="ml-[8px] w-[5px] shrink-0 overflow-hidden pt-[2px]">с</div>
      <div className={`${field} ml-[9px] h-[34px] w-[109px]`}><span className="flex-1 self-center pl-[3px] pt-[3px] tracking-[0.2px]">0,0 °</span><Spin /></div>
      <svg width="24" height="24" viewBox="0 0 24 24" className="ml-[6px] shrink-0" fill="none"><rect x=".5" y=".5" width="23" height="23" fill="#fff" stroke="#bbb" /><path d="M4.5 11L9 19L19 4" stroke="#000" strokeWidth="2.6" /></svg>
      <span className="ml-[9px] w-[92px] shrink-0 pt-[2px] tracking-[0.1px]">Отрисовка</span>
      <svg width="28" height="28" viewBox="0 0 28 28" className="ml-[14px] shrink-0" fill="none" stroke="#737373" strokeWidth="1.5"><path d="M8.5 2H19L24 6L26.500 12H1.500L4 6ZM4 6H24M1.500 12L5 17H23L26.500 12M5 17L10 21H18L23 17M14 1V27M9 2C6 10 8 17 12 21M19 2C22 10 20 17 16 21M10 25.500H18" /></svg>
      <span className="ml-[3px] w-[92px] shrink-0 pt-[3px] tracking-[0.35px]">EPSG:3857</span>
      <svg width="28" height="28" viewBox="0 0 28 28" className="ml-[29px] shrink-0"><path d="M14 1C6 1 .5 5 .5 12C.5 18 5 22 14 22L23 27Q25 28 23.5 24L22 20C26 18 27.5 15 27.5 12C27.5 5 22 1 14 1Z" fill="#666" /><circle cx="8" cy="12" r="2" fill="#fff" /><circle cx="14" cy="12" r="2" fill="#fff" /><circle cx="20" cy="12" r="2" fill="#fff" /></svg>
    </div>
  );
}

const menu: [string, string][] = [
  ["Проект", "w-[87px]"], ["Правка", "w-[88px]"], ["Вид", "w-[53px]"], ["Слой", "w-[66px]"], ["Настройки", "w-[121px]"],
  ["Модули", "w-[93px]"], ["Вектор", "w-[84px]"], ["Растр", "w-[72px]"], ["База данных", "w-[138px]"], ["Интернет", "w-[110px]"],
  ["Меш", "w-[65px]"], ["Анализ данных", "w-[164px]"], ["Справка", "w-[90px]"],
];

export default function App() {
  return (
    <div className="relative flex h-[693px] w-[1346px] flex-col overflow-hidden border border-[#5d5d5d] bg-[#efefef] font-['Open_Sans','Noto_Sans',sans-serif] text-black">
      <header className="flex h-[51px] shrink-0 items-center bg-white pl-[12px]">
        <svg width="28" height="28" viewBox="0 0 28 28" fill="none">
          <circle cx="13.3" cy="13.3" r="10" stroke="#72a52c" strokeWidth="6.3" />
          <path d="M11 9L17 10L27 21V26.5H21L12 16Z" fill="#fff" /><path d="M16 13L27 22V26.5H21L13 17Z" fill="#6ba538" /><path d="M11 9.5L16 10.5L18.5 14L15 17L11 14Z" fill="#ee7c31" /><path d="M15 13L18.5 13.5L20 17L16 18Z" fill="#f5d247" />
        </svg>
        <h1 className="ml-[5px] flex-1 whitespace-nowrap pt-[3px] text-[20px] font-normal leading-[26px]">*Project — QGIS</h1>
        <svg width="178" height="16" viewBox="0 0 178 16" fill="none" stroke="#000" className="mr-[32px]"><path d="M0 7.5H15M81.5 .5H95.5V14.5H81.5ZM162.5 .5L176.5 14.5M176.5 .5L162.5 14.5" /></svg>
      </header>
      <nav className="flex h-[35px] shrink-0 items-center whitespace-nowrap border-b border-[#d6d6d6] pl-[14px] pt-[4px] text-[20px] tracking-[-0.25px]">
        {menu.map(([t, w]) => <span key={t} className={`shrink-0 ${w}`}>{t}</span>)}
      </nav>
      <Toolbar1 />
      <Toolbar2 />
      <div className="flex h-[50px] shrink-0 items-center border-b border-[#b5b5b5] bg-gradient-to-b from-[#fafafa] to-[#ededed] pl-[10px]">
        <Handle />
        <div className="ml-[6px] flex h-[39px] w-[40px] items-center justify-center rounded-[3px] border border-[#ababab] bg-[#dadada]">
          <Ic><path d="M22.5 .5H31L21.5 14L17.5 8ZM21.5 18L31 31.5H22.5L17.5 24Z" fill="#231f20" /><path d="M1 .5H10.5L20.5 16L10.5 31.5H1L11 16Z" fill="#1670c9" /></Ic>
        </div>
      </div>
      <main className="flex h-[412px] shrink-0">
        <LeftColumn />
        <div className="mt-px w-[681px] shrink-0 border border-[#b9b9b9] bg-white" />
        <RightColumn />
      </main>
      <StatusBar />
      <svg width="350" height="140" viewBox="0 0 350 140" className="pointer-events-none absolute left-[579px] top-[284px]" fill="none">
        <path d="M4 135L326 15" stroke="#e33b2e" strokeWidth="4" strokeLinecap="round" /><path d="M350 8L318 5L326 15L328 29Z" fill="#e33b2e" />
      </svg>
      <div className="absolute left-[974px] top-[310px] h-[38px] w-[173px] whitespace-nowrap border border-black bg-[#ffffe1] pl-[4px] pt-[6px] text-[20px] leading-[28px] shadow-[4px_4px_3px_rgba(0,0,0,0.35)]">Добавить в QGIS</div>
    </div>
  );
}
